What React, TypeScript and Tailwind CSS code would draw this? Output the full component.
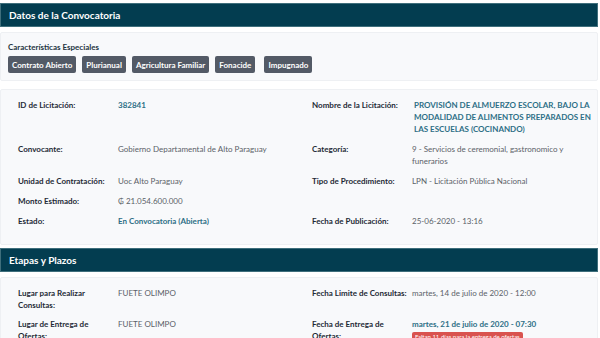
import React from 'react';

const font = { fontFamily: 'Lato, "Liberation Sans", sans-serif' };

function SectionHeader({ title }: { title: string }) {
  return (
    <div className="flex h-[24px] items-center border border-[#3f6f7c] bg-[#033d50] px-[8px] text-[10px] font-bold text-white">
      {title}
    </div>
  );
}

function Label({ children }: { children: React.ReactNode }) {
  return <div className="pr-[6px] font-bold text-[#1e2a36]">{children}</div>;
}

function Value({ children }: { children: React.ReactNode }) {
  return <div className="text-[#5b6168]">{children}</div>;
}

function LinkValue({ children }: { children: React.ReactNode }) {
  return <div className="font-bold text-[#2d6f86]">{children}</div>;
}

const badges = [
  'Contrato Abierto',
  'Plurianual',
  'Agricultura Familiar',
  'Fonacide',
  'Impugnado',
];

export default function App() {
  return (
    <div
      className="h-[338px] w-[600px] overflow-hidden bg-white pr-[2px] pt-[3px] text-[8px] leading-[12px]"
      style={font}
    >
      <SectionHeader title="Datos de la Convocatoria" />

      <div className="mt-[5px] rounded-[2px] border border-[#eef0f3] bg-[#f8f9fb] px-[7px] pb-[7px] pt-[8px]">
        <p className="text-[8px] font-bold text-[#233442]">
          Características Especiales
        </p>
        <div className="mt-[3px] flex gap-[6px]">
          {badges.map((b, i) => (
            <span
              key={b}
              className={`flex h-[17px] items-center rounded-[2px] bg-[#535a66] px-[4px] text-[8px] font-bold text-white ${i === 4 ? 'ml-[3px]' : ''}`}
            >
              {b}
            </span>
          ))}
        </div>
      </div>

      <div className="mt-[8px] rounded-[2px] border border-[#eef0f3] bg-[#f8f9fb] pb-[17px] pl-[17px] pr-[6px] pt-[9px]">
        <div className="grid grid-cols-[100px_194px_100px_1fr] gap-y-[8px]">
          <Label>ID de Licitación:</Label>
          <LinkValue>382841</LinkValue>
          <Label>Nombre de la Licitación:</Label>
          <div className="whitespace-nowrap pl-[2px] font-bold text-[#2d6f86]">
            PROVISIÓN DE ALMUERZO ESCOLAR, BAJO LA
            <br />
            MODALIDAD DE ALIMENTOS PREPARADOS EN
            <br />
            LAS ESCUELAS (COCINANDO)
          </div>

          <Label>Convocante:</Label>
          <Value>Gobierno Departamental de Alto Paraguay</Value>
          <Label>Categoría:</Label>
          <Value>9 - Servicios de ceremonial, gastronomico y funerarios</Value>

          <Label>Unidad de Contratación:</Label>
          <Value>Uoc Alto Paraguay</Value>
          <Label>Tipo de Procedimiento:</Label>
          <Value>LPN - Licitación Pública Nacional</Value>

          <Label>Monto Estimado:</Label>
          <Value>₲ 21.054.600.000</Value>
          <div />
          <div />

          <Label>Estado:</Label>
          <LinkValue>En Convocatoria (Abierta)</LinkValue>
          <Label>Fecha de Publicación:</Label>
          <Value>25-06-2020 - 13:16</Value>
        </div>
      </div>

      <div className="mt-[3px]">
        <SectionHeader title="Etapas y Plazos" />
      </div>

      <div className="mt-[5px] rounded-[2px] border border-[#eef0f3] bg-[#f8f9fb] pb-[10px] pl-[17px] pr-[6px] pt-[9px]">
        <div className="grid grid-cols-[100px_194px_100px_1fr] gap-y-[7px]">
          <div className="w-[80px] font-bold text-[#1e2a36]">
            Lugar para Realizar Consultas:
          </div>
          <Value>FUETE OLIMPO</Value>
          <div className="whitespace-nowrap font-bold text-[#1e2a36]">
            Fecha Limite de Consultas:
          </div>
          <Value>martes, 14 de julio de 2020 - 12:00</Value>

          <div className="w-[80px] font-bold text-[#1e2a36]">
            Lugar de Entrega de Ofertas:
          </div>
          <Value>FUETE OLIMPO</Value>
          <div className="w-[80px] font-bold text-[#1e2a36]">
            Fecha de Entrega de Ofertas:
          </div>
          <div>
            <div className="font-bold text-[#2d6f86]">
              martes, 21 de julio de 2020 - 07:30
            </div>
            <span className="inline-block rounded-[2px] bg-[#d9534f] px-[3px] text-[6px] leading-[9px] text-white">
              Faltan 11 días para la entrega de ofertas
            </span>
          </div>
        </div>
      </div>
    </div>
  );
}
